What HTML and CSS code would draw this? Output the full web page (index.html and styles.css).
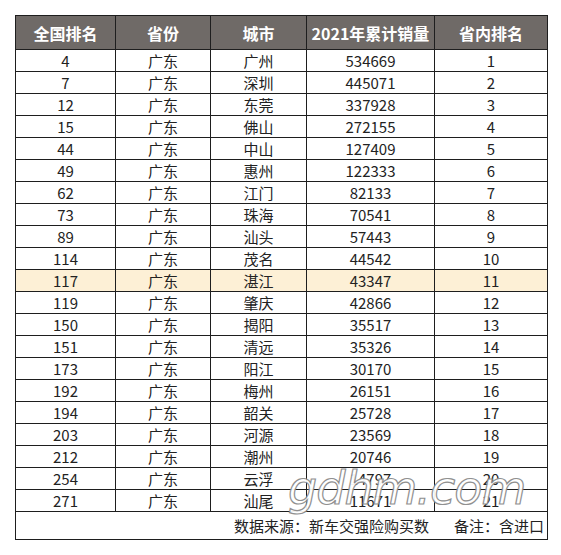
FILE: index.html
```html
<!DOCTYPE html>
<html>
<head>
	<meta charset="utf-8" />
	<title>2021年广东城市销量</title>
	<link rel="stylesheet" href="styles.css">
</head>
<body>
	<div class="sheet">
		<table class="ranking">
			<colgroup>
				<col class="c1"><col class="c2"><col class="c3"><col class="c4"><col class="c5">
			</colgroup>
			<thead>
				<tr>
					<th>全国排名</th>
					<th>省份</th>
					<th>城市</th>
					<th>2021年累计销量</th>
					<th>省内排名</th>
				</tr>
			</thead>
			<tbody>
				<tr><td>4</td><td>广东</td><td>广州</td><td>534669</td><td>1</td></tr>
				<tr><td>7</td><td>广东</td><td>深圳</td><td>445071</td><td>2</td></tr>
				<tr><td>12</td><td>广东</td><td>东莞</td><td>337928</td><td>3</td></tr>
				<tr><td>15</td><td>广东</td><td>佛山</td><td>272155</td><td>4</td></tr>
				<tr><td>44</td><td>广东</td><td>中山</td><td>127409</td><td>5</td></tr>
				<tr><td>49</td><td>广东</td><td>惠州</td><td>122333</td><td>6</td></tr>
				<tr><td>62</td><td>广东</td><td>江门</td><td>82133</td><td>7</td></tr>
				<tr><td>73</td><td>广东</td><td>珠海</td><td>70541</td><td>8</td></tr>
				<tr><td>89</td><td>广东</td><td>汕头</td><td>57443</td><td>9</td></tr>
				<tr><td>114</td><td>广东</td><td>茂名</td><td>44542</td><td>10</td></tr>
				<tr class="mark"><td>117</td><td>广东</td><td>湛江</td><td>43347</td><td>11</td></tr>
				<tr><td>119</td><td>广东</td><td>肇庆</td><td>42866</td><td>12</td></tr>
				<tr><td>150</td><td>广东</td><td>揭阳</td><td>35517</td><td>13</td></tr>
				<tr><td>151</td><td>广东</td><td>清远</td><td>35326</td><td>14</td></tr>
				<tr><td>173</td><td>广东</td><td>阳江</td><td>30170</td><td>15</td></tr>
				<tr><td>192</td><td>广东</td><td>梅州</td><td>26151</td><td>16</td></tr>
				<tr><td>194</td><td>广东</td><td>韶关</td><td>25728</td><td>17</td></tr>
				<tr><td>203</td><td>广东</td><td>河源</td><td>23569</td><td>18</td></tr>
				<tr><td>212</td><td>广东</td><td>潮州</td><td>20746</td><td>19</td></tr>
				<tr><td>254</td><td>广东</td><td>云浮</td><td>14797</td><td>20</td></tr>
				<tr><td>271</td><td>广东</td><td>汕尾</td><td>11671</td><td>21</td></tr>
			</tbody>
			<tfoot>
				<tr>
					<td colspan="5"><span>数据来源：新车交强险购买数</span><span class="note">备注：含进口</span></td>
				</tr>
			</tfoot>
		</table>
		<div class="watermark">gdhm.com</div>
	</div>
</body>
</html>
```

FILE: styles.css
```css
body {
	margin: 0;
	padding: 0;
	background: #fff;
	font-family: "Noto Sans CJK SC", "Noto Sans", sans-serif;
	color: #222;
}

.sheet {
	position: relative;
	padding: 15px 15px 0;
}

.ranking {
	border-collapse: collapse;
	table-layout: fixed;
	width: 532px;
	border: 1px solid #1e1e1e;
}

	.ranking .c1 { width: 100px; }
	.ranking .c2 { width: 95px; }
	.ranking .c3 { width: 96px; }
	.ranking .c4 { width: 128px; }
	.ranking .c5 { width: 113px; }

	.ranking th {
		height: 33px;
		padding: 0;
		background: #6f6a67;
		color: #fff;
		font-size: 16px;
		font-weight: 700;
		border: 1px solid #1e1e1e;
		line-height: 1;
	}

	.ranking td {
		height: 21px;
		padding: 0;
		text-align: center;
		font-size: 15px;
		line-height: 1;
		border: 1px solid #1e1e1e;
	}

	.ranking tr.mark td {
		background: #fdf0d6;
	}

	.ranking tfoot td {
		height: 27px;
		text-align: right;
		padding-right: 3px;
	}

.note {
	margin-left: 25px;
}

.watermark {
	position: absolute;
	left: 288px;
	top: 461px;
	font-family: "DejaVu Sans", sans-serif;
	font-style: oblique;
	font-weight: 200;
	font-size: 46px;
	letter-spacing: -1px;
	color: #fff;
	-webkit-text-stroke: 1.2px #8a8a8a;
	opacity: 0.94;
}
```
